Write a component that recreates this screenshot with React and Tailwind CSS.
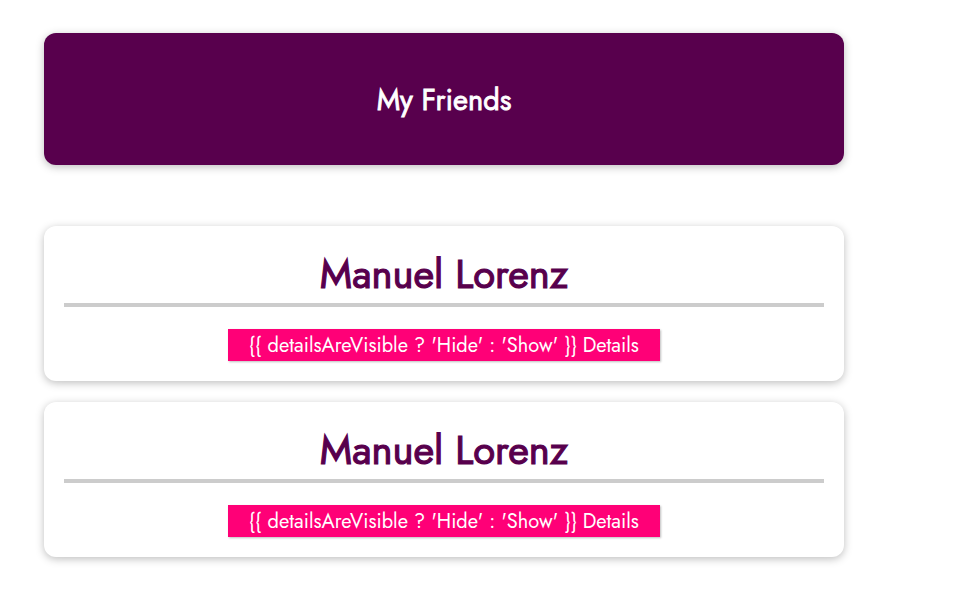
const friends = [
    { id: 'manuel', name: 'Manuel Lorenz' },
    { id: 'julie', name: 'Manuel Lorenz' },
]

const FriendContact = ({ name }) => {
    return (
        <li className="bg-white rounded-[12px] shadow-[0_2px_8px_rgba(0,0,0,0.26)] p-5 text-center">
            <h2 className="text-[40px] leading-[57px] font-normal text-[#58004d] [-webkit-text-stroke:1.1px_#58004d] border-b-4 border-[#ccc] mb-[22px]">
                {name}
            </h2>
            <button className="bg-[#ff0077] border border-[#ff0077] text-white text-[20px] leading-[28px] pt-[2px] pb-0 px-5 shadow-[1px_1px_2px_rgba(0,0,0,0.26)]">
                {"{{ detailsAreVisible ? 'Hide' : 'Show' }} Details"}
            </button>
        </li>
    )
}

const App = () => {
    return (
        <div className="min-h-screen bg-white font-['Jost','Lato','Open_Sans',sans-serif]">
            <div className="w-[800px] ml-[44px] pt-[33px]">
                {/* Header */}
                <header className="h-[132px] pt-[3px] rounded-[12px] bg-[#58004d] shadow-[0_2px_8px_rgba(0,0,0,0.26)] flex items-center justify-center">
                    <h1 className="text-white text-[29px] font-normal [-webkit-text-stroke:0.8px_#ffffff]">My Friends</h1>
                </header>

                {/* Friends list */}
                <ul className="mt-[61px] flex flex-col gap-[21px]">
                    {friends.map(friend => (
                        <FriendContact key={friend.id} name={friend.name} />
                    ))}
                </ul>
            </div>
        </div>
    )
}

export default App
